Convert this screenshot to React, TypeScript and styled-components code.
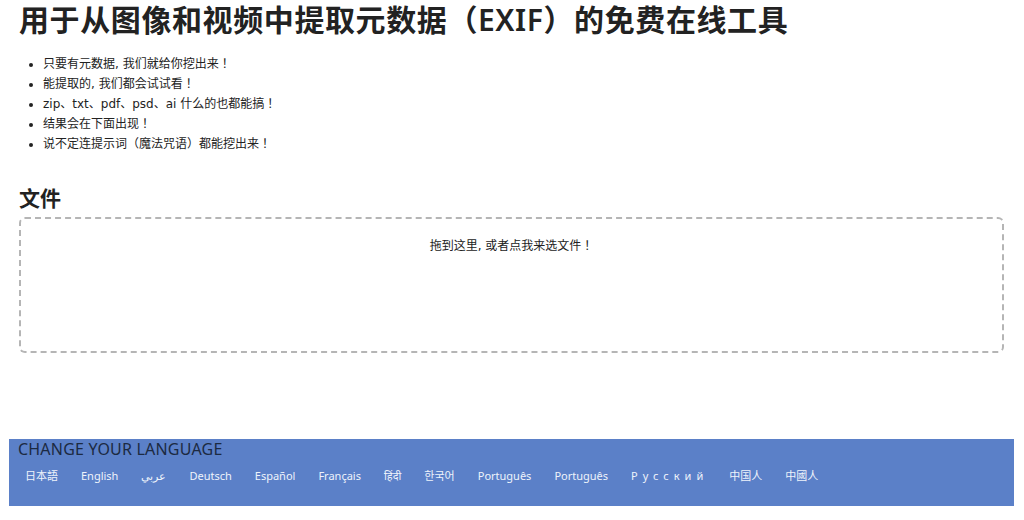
import React from 'react'
import styled, { createGlobalStyle } from 'styled-components'

const GlobalStyle = createGlobalStyle`
  html, body {
    margin: 0;
    padding: 0;
    background: #ffffff;
  }
  body {
    font-family: "DejaVu Sans", "Noto Sans CJK JP", sans-serif;
    color: #222222;
  }
`
const Page = styled.div`
  display: flex;
  flex-direction: column;
  padding: 0 10px 0 9px;
`
const Main = styled.main`
  display: flex;
  flex-direction: column;
  padding: 0 10px;
`
const Title = styled.h1`
  margin: 0;
  font-family: "Noto Sans", "Noto Sans CJK SC", sans-serif;
  font-size: 30px;
  line-height: 40px;
  font-weight: 600;
  color: #222;
  letter-spacing: 0.6px;
`
const Points = styled.ul`
  margin: 14px 0 0 0;
  padding-left: 24px;
  list-style: disc;
  li {
    font-size: 12px;
    line-height: 20px;
  }
`
const SubTitle = styled.h2`
  margin: 29px 0 0 0;
  font-family: "Noto Sans", "Noto Sans CJK SC", sans-serif;
  font-size: 21px;
  line-height: 30px;
  font-weight: 600;
`
const DropZone = styled.div`
  margin-top: 4px;
  border: 2px dashed #b5b5b5;
  border-radius: 6px;
  padding-top: 17px;
  box-sizing: border-box;
  height: 136px;
  text-align: center;
  font-size: 12px;
  line-height: 20px;
  cursor: pointer;
`
const Footer = styled.footer`
  margin-top: 86px;
  background-color: #5b80c8;
  height: 67px;
  box-sizing: border-box;
  padding: 0 9px;
`
const FooterTitle = styled.div`
  font-family: "Noto Sans", sans-serif;
  font-size: 16px;
  line-height: 20px;
  color: #1c2a42;
  letter-spacing: 0.2px;
`
const LangRow = styled.div`
  display: flex;
  align-items: center;
  margin-top: 7px;
  padding-left: 7px;
`
const LangLink = styled.a<{ $spaced?: boolean }>`
  font-family: "Noto Sans", "Noto Sans CJK SC", sans-serif;
  font-size: 11px;
  line-height: 20px;
  color: #eef3fb;
  text-decoration: none;
  margin-right: ${(p) => (p.$spaced ? '21px' : '23px')};
  letter-spacing: ${(p) => (p.$spaced ? '5px' : '0')};
`

const points = [
  '只要有元数据, 我们就给你挖出来！',
  '能提取的, 我们都会试试看！',
  'zip、txt、pdf、psd、ai 什么的也都能搞！',
  '结果会在下面出现！',
  '说不定连提示词（魔法咒语）都能挖出来！',
]

const langs = [
  '日本語',
  'English',
  'عربي',
  'Deutsch',
  'Español',
  'Français',
  'हिंदी',
  '한국어',
  'Português',
  'Português',
  'Русский',
  '中国人',
  '中國人',
]

const App = () => {
  return (
    <Page>
      <GlobalStyle />
      <Main>
        <Title>用于从图像和视频中提取元数据（EXIF）的免费在线工具</Title>
        <Points>
          {points.map((p) => (
            <li key={p}>{p}</li>
          ))}
        </Points>
        <SubTitle>文件</SubTitle>
        <DropZone>拖到这里, 或者点我来选文件！</DropZone>
      </Main>
      <Footer>
        <FooterTitle>CHANGE YOUR LANGUAGE</FooterTitle>
        <LangRow>
          {langs.map((l, i) => (
            <LangLink key={i} href="#" $spaced={l === 'Русский'}>
              {l}
            </LangLink>
          ))}
        </LangRow>
      </Footer>
    </Page>
  )
}

export default App
